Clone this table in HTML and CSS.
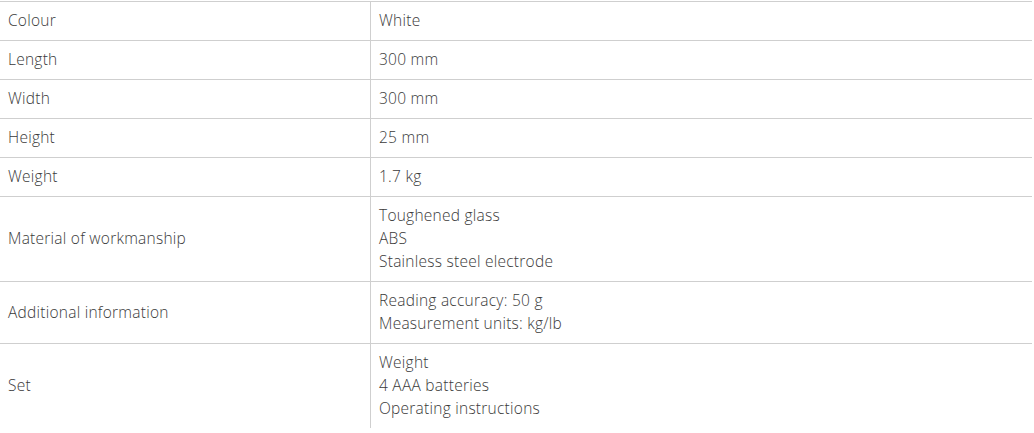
FILE: index.html
```html
<!DOCTYPE html>
<html lang="en">
<head>
<meta charset="utf-8">
<title>Specifications</title>
<link rel="stylesheet" href="styles.css">
</head>
<body>
<table class="specs">
  <tbody>
    <tr><td class="key">Colour</td><td class="val">White</td></tr>
    <tr><td class="key">Length</td><td class="val">300 mm</td></tr>
    <tr><td class="key">Width</td><td class="val">300 mm</td></tr>
    <tr><td class="key">Height</td><td class="val">25 mm</td></tr>
    <tr><td class="key">Weight</td><td class="val">1.7 kg</td></tr>
    <tr><td class="key">Material of workmanship</td><td class="val">Toughened glass<br>ABS<br>Stainless steel electrode</td></tr>
    <tr><td class="key">Additional information</td><td class="val">Reading accuracy: 50 g<br>Measurement units: kg/lb</td></tr>
    <tr class="last"><td class="key">Set</td><td class="val">Weight<br>4 AAA batteries<br>Operating instructions</td></tr>
  </tbody>
</table>
</body>
</html>
```
FILE: styles.css
```css
html, body {
  margin: 0;
  padding: 0;
  background: #fff;
}
body {
  padding-top: 1px;
}
.specs {
  width: 1032px;
  border-collapse: collapse;
  font-family: "Open Sans", "Liberation Sans", sans-serif;
  font-size: 15.5px;
  font-weight: 300;
  letter-spacing: 0.25px;
  line-height: 23px;
  color: #3a3a3a;
  border-top: 1px solid #cfcfcf;
}
.specs td {
  padding: 7px 8px 8px 8px;
  vertical-align: middle;
  border-bottom: 1px solid #cfcfcf;
}
.specs tr.last td {
  border-bottom: none;
}
.specs .key {
  width: 354px;
  border-right: 1px solid #cfcfcf;
}
```
